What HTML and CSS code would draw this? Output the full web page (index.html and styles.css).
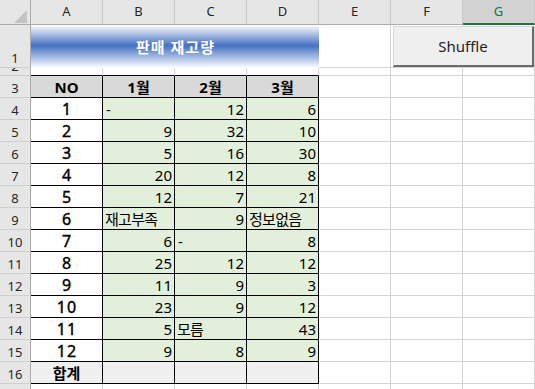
FILE: index.html
```html
<!DOCTYPE html>
<html lang="ko">
<head>
<meta charset="utf-8">
<title>판매 재고량</title>
<link rel="stylesheet" href="styles.css">
</head>
<body>
<div class="sheet">
  <!-- column headers -->
  <div class="corner"><svg width="13" height="13" viewBox="0 0 13 13"><polygon points="13,0 13,13 0,13" fill="#c4c4c4"/></svg></div>
  <div class="colhead">A</div>
  <div class="colhead">B</div>
  <div class="colhead">C</div>
  <div class="colhead">D</div>
  <div class="colhead">E</div>
  <div class="colhead">F</div>
  <div class="colhead sel">G</div>

  <!-- row 1: title -->
  <div class="rowhead">1</div>
  <div class="title">판매 재고량</div>
  <div class="cell"></div>
  <div class="cell"></div>
  <div class="cell"></div>

  <!-- row 2: spacer -->
  <div class="rowhead">2</div>
  <div class="cell edge"></div>
  <div class="cell edge"></div>
  <div class="cell edge"></div>
  <div class="cell edge"></div>
  <div class="cell"></div>
  <div class="cell"></div>
  <div class="cell"></div>

  <!-- row 3: table header -->
  <div class="rowhead">3</div>
  <div class="cell t hd">NO</div>
  <div class="cell t hd">1월</div>
  <div class="cell t hd">2월</div>
  <div class="cell t hd">3월</div>
  <div class="cell"></div>
  <div class="cell"></div>
  <div class="cell"></div>

  <div class="rowhead">4</div>
  <div class="cell t no">1</div>
  <div class="cell t txt">-</div>
  <div class="cell t num">12</div>
  <div class="cell t num">6</div>
  <div class="cell"></div><div class="cell"></div><div class="cell"></div>

  <div class="rowhead">5</div>
  <div class="cell t no">2</div>
  <div class="cell t num">9</div>
  <div class="cell t num">32</div>
  <div class="cell t num">10</div>
  <div class="cell"></div><div class="cell"></div><div class="cell"></div>

  <div class="rowhead">6</div>
  <div class="cell t no">3</div>
  <div class="cell t num">5</div>
  <div class="cell t num">16</div>
  <div class="cell t num">30</div>
  <div class="cell"></div><div class="cell"></div><div class="cell"></div>

  <div class="rowhead">7</div>
  <div class="cell t no">4</div>
  <div class="cell t num">20</div>
  <div class="cell t num">12</div>
  <div class="cell t num">8</div>
  <div class="cell"></div><div class="cell"></div><div class="cell"></div>

  <div class="rowhead">8</div>
  <div class="cell t no">5</div>
  <div class="cell t num">12</div>
  <div class="cell t num">7</div>
  <div class="cell t num">21</div>
  <div class="cell"></div><div class="cell"></div><div class="cell"></div>

  <div class="rowhead">9</div>
  <div class="cell t no">6</div>
  <div class="cell t txt ko">재고부족</div>
  <div class="cell t num">9</div>
  <div class="cell t txt ko">정보없음</div>
  <div class="cell"></div><div class="cell"></div><div class="cell"></div>

  <div class="rowhead">10</div>
  <div class="cell t no">7</div>
  <div class="cell t num">6</div>
  <div class="cell t txt">-</div>
  <div class="cell t num">8</div>
  <div class="cell"></div><div class="cell"></div><div class="cell"></div>

  <div class="rowhead">11</div>
  <div class="cell t no">8</div>
  <div class="cell t num">25</div>
  <div class="cell t num">12</div>
  <div class="cell t num">12</div>
  <div class="cell"></div><div class="cell"></div><div class="cell"></div>

  <div class="rowhead">12</div>
  <div class="cell t no">9</div>
  <div class="cell t num">11</div>
  <div class="cell t num">9</div>
  <div class="cell t num">3</div>
  <div class="cell"></div><div class="cell"></div><div class="cell"></div>

  <div class="rowhead">13</div>
  <div class="cell t no">10</div>
  <div class="cell t num">23</div>
  <div class="cell t num">9</div>
  <div class="cell t num">12</div>
  <div class="cell"></div><div class="cell"></div><div class="cell"></div>

  <div class="rowhead">14</div>
  <div class="cell t no">11</div>
  <div class="cell t num">5</div>
  <div class="cell t txt ko">모름</div>
  <div class="cell t num">43</div>
  <div class="cell"></div><div class="cell"></div><div class="cell"></div>

  <div class="rowhead">15</div>
  <div class="cell t no">12</div>
  <div class="cell t num">9</div>
  <div class="cell t num">8</div>
  <div class="cell t num">9</div>
  <div class="cell"></div><div class="cell"></div><div class="cell"></div>

  <div class="rowhead">16</div>
  <div class="cell t sum">합계</div>
  <div class="cell t sum"></div>
  <div class="cell t sum"></div>
  <div class="cell t sum"></div>
  <div class="cell"></div><div class="cell"></div><div class="cell"></div>

  <!-- row 17, only its top edge is in view -->
  <div class="rowhead"></div>
  <div class="cell"></div><div class="cell"></div><div class="cell"></div><div class="cell"></div>
  <div class="cell"></div><div class="cell"></div><div class="cell"></div>

  <!-- floating macro button -->
  <button class="shuffle" type="button">Shuffle</button>
</div>
</body>
</html>
```

FILE: styles.css
```css
* {
  box-sizing: border-box;
}

html,
body {
  margin: 0;
  padding: 0;
  background: #fff;
  overflow: hidden;
}

body {
  font-family: "Noto Sans", "Noto Sans CJK KR", sans-serif;
  color: #000;
}

/* worksheet grid: row header + columns A..G */
.sheet {
  position: relative;
  display: grid;
  grid-template-columns: 31px repeat(7, 72px);
  grid-template-rows: 25px 43px 8px repeat(14, 22px) 22px;
  width: 535px;
}

.corner {
  background: #e6e6e6;
  border-right: 1px solid #ababab;
  border-bottom: 1px solid #ababab;
  display: flex;
  justify-content: flex-end;
  align-items: flex-end;
  padding: 0 3px 1px 0;
}

.corner svg {
  display: block;
}

.colhead {
  background: #e6e6e6;
  border-right: 1px solid #c8c8c8;
  border-bottom: 1px solid #ababab;
  display: flex;
  justify-content: center;
  align-items: center;
  padding-bottom: 3px;
  font-size: 13px;
  line-height: 18px;
  color: #262626;
}

.colhead.sel {
  background: #d2d2d2;
  border-bottom: 2px solid #217346;
  color: #217346;
  padding-bottom: 2px;
}

/* row numbers sit on the bottom edge, so short rows clip them */
.rowhead {
  background: #e6e6e6;
  border-right: 1px solid #ababab;
  border-bottom: 1px solid #cfcfcf;
  display: flex;
  justify-content: center;
  align-items: flex-end;
  overflow: hidden;
  font-size: 13px;
  line-height: 18px;
  color: #262626;
}

/* ordinary cell with light gridlines */
.cell {
  border-right: 1px solid #d4d4d4;
  border-bottom: 1px solid #d4d4d4;
  display: flex;
  align-items: flex-end;
  padding: 0 2px;
  overflow: hidden;
  white-space: nowrap;
  font-size: 15px;
  line-height: 20px;
}

/* top edge of the table */
.edge {
  border-bottom-color: #000;
}

/* bordered table cells */
.t {
  border-right-color: #000;
  border-bottom-color: #000;
}

.hd {
  background: #d9d9d9;
  font-weight: 700;
  justify-content: center;
}

/* NO column: slightly larger, semi-heavy digits */
.no {
  font-size: 16px;
  font-weight: 400;
  -webkit-text-stroke: 0.4px #000;
  letter-spacing: 1px;
  padding-left: 3px;
  justify-content: center;
}

.num {
  background: #e2efda;
  justify-content: flex-end;
}

.txt {
  background: #e2efda;
  justify-content: flex-start;
  padding-left: 3px;
}

.ko {
  letter-spacing: -0.7px;
  padding-left: 2px;
}

.sum {
  background: #f0f0f0;
  font-weight: 700;
  justify-content: center;
}

/* merged title A1:D1 */
.title {
  grid-column: span 4;
  background: linear-gradient(to bottom, #ffffff 0%, #4472c4 48%, #ffffff 100%);
  color: #fff;
  font-size: 15px;
  font-weight: 700;
  letter-spacing: 1px;
  display: flex;
  align-items: center;
  justify-content: center;
  padding: 0 0 1px 1px;
}

/* form button floating over F1:G1 */
.shuffle {
  position: absolute;
  left: 393px;
  top: 26px;
  width: 141px;
  height: 41px;
  margin: 0;
  padding: 0;
  background: #efefef;
  border-style: solid;
  border-width: 1px 2px 2px 1px;
  border-color: #d6d6d6 #6b6b6b #6b6b6b #d6d6d6;
  font-family: "Noto Sans", sans-serif;
  font-size: 15px;
  color: #1f1f1f;
}
```
